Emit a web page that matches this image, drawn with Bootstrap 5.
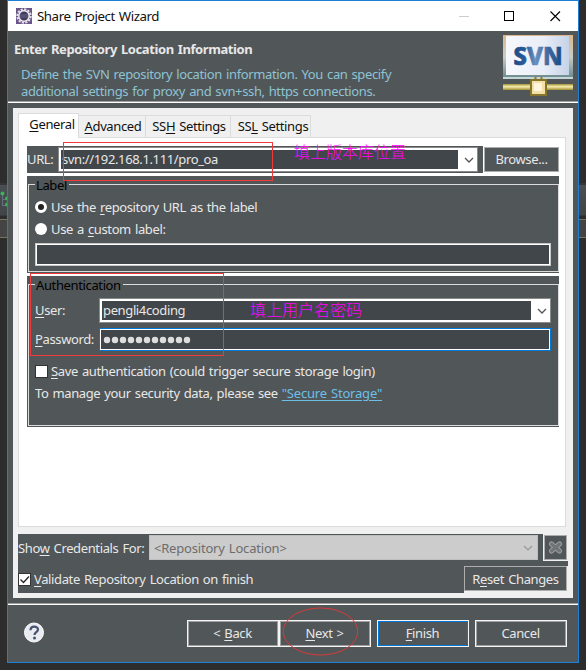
<!DOCTYPE html>
<html lang="en"><head><meta charset="utf-8"><title>Share Project Wizard</title>
<link href="https://cdn.jsdelivr.net/npm/bootstrap@5.3.0/dist/css/bootstrap.min.css" rel="stylesheet">
<style>
body{width:586px;height:670px;overflow:hidden;background:#2d2d2d;font:13px/18px "Noto Sans","Noto Sans CJK SC",sans-serif;color:#e8e8e8;letter-spacing:-.37px;word-spacing:1px}
span,u{white-space:nowrap}
u{text-underline-offset:2px;text-decoration-thickness:1px}
svg{flex:none;display:block}
.backdrop{left:0;top:183px;width:586px;height:56px;background:linear-gradient(#33373a 0 2px,#4b4f53 2px,#414548 32px,#2d2d2d 33px 36px,#77745f 36px 37px,#444 37px 54px,#77745f 54px 55px,#2d2d2d 55px)}
.tree-art{left:0;top:190px}
.wizard{width:572px;height:663px;margin-left:7px;border:1px solid #1d7fd8;background:#515658}
.titlebar{height:30px;background:#fff;color:#111;padding:0 15px 1px 8px}
.titlebar span{font-size:13.3px;margin-left:5px;letter-spacing:-.45px}
.heading-area{height:70px;padding:9px 4px 0 6px}
.heading-area h1{font-size:13px;line-height:18px;font-weight:700;margin:0 0 8px;letter-spacing:-.4px}
.heading-area p{color:#8ec3d3;line-height:17px;margin:0 0 0 7px}
.svn-art{margin-top:-5px}
.rule{height:2px;background:linear-gradient(#a0a0a0 50%,#fff 50%)}
.panel{margin:5px 5px 0;width:560px;height:490px;background:#f0f0f0;padding:5px 5px 0}
.tabs{height:24px;color:#111}
.tabx{height:22px;border:1px solid #dcdcdc;border-left:0;border-bottom:0;line-height:21px;padding-left:2px;text-align:center}
.tabx.on{height:25px;width:61px;background:#fff;border-left:1px solid #dcdcdc;line-height:21px;margin-bottom:-1px;padding-left:7px;position:relative;z-index:1}
.sheet{width:548px;height:390px;border:1px solid #dcdcdc;background:#fff;padding:8px 0 0 8px}
.urlbox{width:456px;height:27px;background:#515658}
.combo{border:1px solid #8a8a8a;background:#fff;padding:2px}
.combo .val,.field .val{background:#41464a;height:19px;line-height:18px;padding-left:1px}
.chev{width:17px}
.field{height:23px;border:1px solid #c8c8c8;background:#fff;padding:1px}
.focused{border-color:#0078d7}
.push{height:25px;border:1px solid #adadad;background:#515658;line-height:24px;text-align:center}
.group{width:532px;margin-top:3px;background:#515658;padding:8px 0 1px 1px}
.frame{border:1px solid #dcdcdc;width:531px;padding:0 7px 0 6px}
.legendx{color:#000;height:18px;margin-top:-9px;padding:0 2px 0 1px;background:#515658;width:max-content}
.frow{height:22px;padding-left:0}
.dot{width:12px;height:12px;border-radius:50%;background:#fff;margin-right:4px;flex:none}
.dot.on{border:3px solid #fff;background:#222}
.tick{width:13px;height:13px;border:1px solid #333;background:#fff;margin-right:3px;flex:none}
.lab{width:64px;margin-top:-1px}
.link1,.link1:hover{color:#6cc0e8;text-decoration:underline;text-underline-offset:2px;letter-spacing:-.2px}
.note{color:#f0f;font-family:"Noto Sans CJK SC",sans-serif;font-size:16px;font-weight:300;line-height:20px;white-space:nowrap;letter-spacing:0}
.note1{left:286px;top:140px}
.note2{left:242px;top:298px}
.red1{left:55px;top:141px;width:210px;height:39px;border:1px solid #f03a3a}
.red2{left:22px;top:272px;width:194px;height:83px;border:1px solid #f03a3a}
.ring{left:274px;top:606px}
.creds{margin-top:7px;height:59px}
.credbox{width:525px;height:27px;background:#515658}
.disabled-combo{width:389px;height:25px;background:#ccc;border:1px solid #bfbfbf;color:#6d6d6d;padding:0 0 0 4px;letter-spacing:-.2px}
.gutter{background:#515658;height:5px;width:104px}
.validate{width:446px;height:32px;background:#515658;padding-top:4px}
.footbar{padding:15px 11px 0 15px}
.nav-btn{width:92px;height:27px;border:1px solid #f4f4f4;box-shadow:inset 0 0 0 1px #9f9f9f;line-height:25px;text-align:center}
.nav-btn span{margin-right:1px}
.nav-btn.main-act{box-shadow:inset 0 0 0 1px #0078d7}
</style></head><body>
<div class="backdrop position-absolute"></div>
<svg class="position-absolute tree-art" width="7" height="24"><path d="M2.500 5v11M2.500 9.500h5M2.500 15.500h5" stroke="#66717d" fill="none"/><circle cx="2.500" cy="3.500" r="2" fill="#36b45d"/><circle cx="7" cy="8.500" r="2" fill="#36b45d"/><circle cx="7" cy="14.500" r="2" fill="#36b45d"/></svg>
<main class="wizard position-relative">
<div class="titlebar d-flex align-items-center">
<svg width="16" height="16"><rect width="16" height="16" fill="#69558a"/><circle cx="8" cy="8" r="6.700" fill="none" stroke="#e4e2e6" stroke-width="2" stroke-dasharray="2.200 1.300"/><circle cx="8" cy="8" r="5.200" fill="#41385f" stroke="#eee" stroke-width="1.500"/><path d="M4 7h8M4 9h8" stroke="#6f6689"/></svg>
<span>Share Project Wizard</span>
<svg class="ms-auto" width="104" height="12"><path d="M0 6.500h10" stroke="#ccc"/><rect x="45.500" y="1.500" width="9" height="9" fill="none" stroke="#000"/><path d="M91.500 1.500l9.500 9.500M101 1.500L91.500 11" stroke="#000" stroke-width="1.100"/></svg>
</div>
<div class="heading-area d-flex justify-content-between"><div><h1><span>Enter Repository Location Information</span></h1><p><span>Define the SVN repository location information. You can specify</span><br><span>additional settings for proxy and svn+ssh, https connections.</span></p></div>
<svg class="svn-art" width="71" height="62"><defs><linearGradient id="fr" x2="0" y2="1"><stop stop-color="#dcb78f"/><stop offset=".5" stop-color="#c9cbc4"/><stop offset="1" stop-color="#66888a"/></linearGradient><linearGradient id="sc"><stop stop-color="#f6f8fc"/><stop offset=".6" stop-color="#e9edf7"/><stop offset="1" stop-color="#c5d3e8"/></linearGradient><linearGradient id="tx"><stop stop-color="#1c4a86"/><stop offset=".25" stop-color="#2c5c98"/><stop offset=".45" stop-color="#6a90c0"/><stop offset=".7" stop-color="#43699f"/><stop offset="1" stop-color="#134a88"/></linearGradient><linearGradient id="bar" x2="0" y2="1"><stop stop-color="#a39435"/><stop offset=".45" stop-color="#f6edb0"/><stop offset="1" stop-color="#a08c30"/></linearGradient></defs>
<rect y="0" width="70" height="44" fill="url(#fr)"/><rect x="3" y="1" width="63" height="39" fill="url(#sc)"/><path d="M0 43h70" stroke="#c4d6d8" stroke-width="2"/><text x="10.500" y="30" textLength="49" lengthAdjust="spacingAndGlyphs" font-family="Noto Sans" font-weight="800" font-size="24" fill="url(#tx)" stroke="url(#tx)" stroke-width=".7" letter-spacing="0">SVN</text><rect y="49" width="70" height="6" fill="url(#bar)"/><path d="M32.500 42v4M38.500 42v4" stroke="#8a7a2a" stroke-width="2"/><rect x="28" y="45" width="15" height="15" fill="#f4dfa8" stroke="#85752a" stroke-width="2"/><rect x="31" y="48" width="8" height="8" fill="#fff5dc"/></svg></div>
<div class="rule"></div>
<div class="panel">
 <div class="tabs d-flex align-items-end">
  <div class="tabx on"><span><u>G</u>eneral</span></div><div class="tabx" style="width:67px"><span><u>A</u>dvanced</span></div><div class="tabx" style="width:85px"><span>SS<u>H</u> Settings</span></div><div class="tabx" style="width:80px;padding-left:5px"><span>SS<u>L</u> Settings</span></div>
 </div>
 <div class="sheet">
  <div class="d-flex"><div class="urlbox d-flex align-items-center"><span style="width:31px;margin-top:-1px">URL:</span><div class="combo d-flex" style="width:420px;height:25px"><div class="val flex-grow-1"><span>svn://192.168.1.111/pro_oa</span></div><svg class="chev" height="19"><path d="M7 8l4 4 4-4" fill="none" stroke="#555" stroke-width="1.300"/></svg></div></div>
  <div class="push" style="width:75px;margin:1px 0 0 1px;line-height:23px"><span>Browse...</span></div></div>
  <div class="group" style="height:97px"><div class="frame" style="height:88px"><div class="legendx">Label</div>
   <div class="frow d-flex align-items-center" style="margin-top:2px"><i class="dot on"></i><span>Use the <u>r</u>epository URL as the label</span></div>
   <div class="frow d-flex align-items-center"><i class="dot"></i><span>Use a <u>c</u>ustom label:</span></div>
   <div class="field" style="margin-top:3px"><div class="val"></div></div></div></div>
  <div class="group" style="height:151px"><div class="frame" style="height:142px"><div class="legendx">Authentication</div>
   <div class="d-flex align-items-center" style="margin-top:4px"><span class="lab"><u>U</u>ser:</span><div class="combo d-flex flex-grow-1" style="height:25px"><div class="val flex-grow-1"><span>pengli4coding</span></div><svg class="chev" height="19"><path d="M7 8l4 4 4-4" fill="none" stroke="#555" stroke-width="1.300"/></svg></div></div>
   <div class="d-flex align-items-center" style="margin-top:5px"><span class="lab"><u>P</u>assword:</span><div class="field focused flex-grow-1"><div class="val"><svg width="92" height="19"><path d="M5 10h81" stroke="#ddd" stroke-width="6.400" stroke-linecap="round" stroke-dasharray="0 8"/></svg></div></div></div>
   <div class="d-flex align-items-center" style="margin-top:11px"><i class="tick"></i><span><u>S</u>ave authentication (could trigger secure storage login)</span></div>
   <div style="margin-top:4px"><span>To manage your security data, please see <a class="link1" href="#">"Secure Storage"</a></span></div></div></div>
 </div>
 <div class="creds">
  <div class="d-flex"><div class="credbox d-flex align-items-center"><span style="width:131px">Sho<u>w</u> Credentials For:</span><div class="disabled-combo d-flex align-items-center justify-content-between"><span>&lt;Repository Location&gt;</span><svg width="16" height="19"><path d="M3 8l4 4 4-4" fill="none" stroke="#999" stroke-width="1.200"/></svg></div></div>
  <div class="push d-flex align-items-center justify-content-center" style="width:23px;margin:1px 0 0 1px"><svg width="15" height="13"><path d="M3.500 3l8 7M11.500 3l-8 7" stroke="#9a9d9f" stroke-width="5" stroke-linecap="round"/><path d="M3.500 3l8 7M11.500 3l-8 7" stroke="#707476" stroke-width="3" stroke-linecap="round"/></svg></div></div>
  <div class="d-flex"><div class="validate d-flex align-items-center"><svg width="13" height="13" style="margin-right:3px"><rect x=".5" y=".5" width="12" height="12" fill="#fff" stroke="#333"/><path d="M2.500 6.500l3 3 5.500-6" fill="none" stroke="#222" stroke-width="1.300"/></svg><span><u>V</u>alidate Repository Location on finish</span></div><div class="d-flex flex-column align-items-end"><div class="gutter"></div><div class="push" style="width:103px;margin-right:1px"><span>R<u>e</u>set Changes</span></div></div></div>
 </div>
</div>
<div class="rule" style="margin-top:5px"></div>
<div class="footbar d-flex">
<svg width="21" height="21" style="margin-top:2px"><circle cx="11" cy="10.500" r="9.500" fill="#e9ebf0" stroke="#fff"/><path d="M7.500 8.200c0-4.700 7.500-4.500 7.500-.6 0 2.500-3.500 2.700-3.500 5.400" fill="none" stroke="#46536f" stroke-width="2.200"/><circle cx="11.500" cy="16" r="1.500" fill="#46536f"/></svg>
<div class="d-flex ms-auto"><div class="nav-btn"><span>&lt; <u>B</u>ack</span></div><div class="nav-btn"><span><u>N</u>ext &gt;</span></div><div class="nav-btn main-act" style="margin:0 6px"><span><u>F</u>inish</span></div><div class="nav-btn"><span>Cancel</span></div></div></div>
<div class="position-absolute red1"></div><div class="position-absolute red2"></div>
<div class="position-absolute note note1">填上版本库位置</div><div class="position-absolute note note2">填上用户名密码</div>
<svg class="position-absolute ring" width="77" height="49"><ellipse cx="38.500" cy="24.500" rx="37.300" ry="23.500" fill="none" stroke="#d93a3a"/></svg>
</main>
</body></html>
